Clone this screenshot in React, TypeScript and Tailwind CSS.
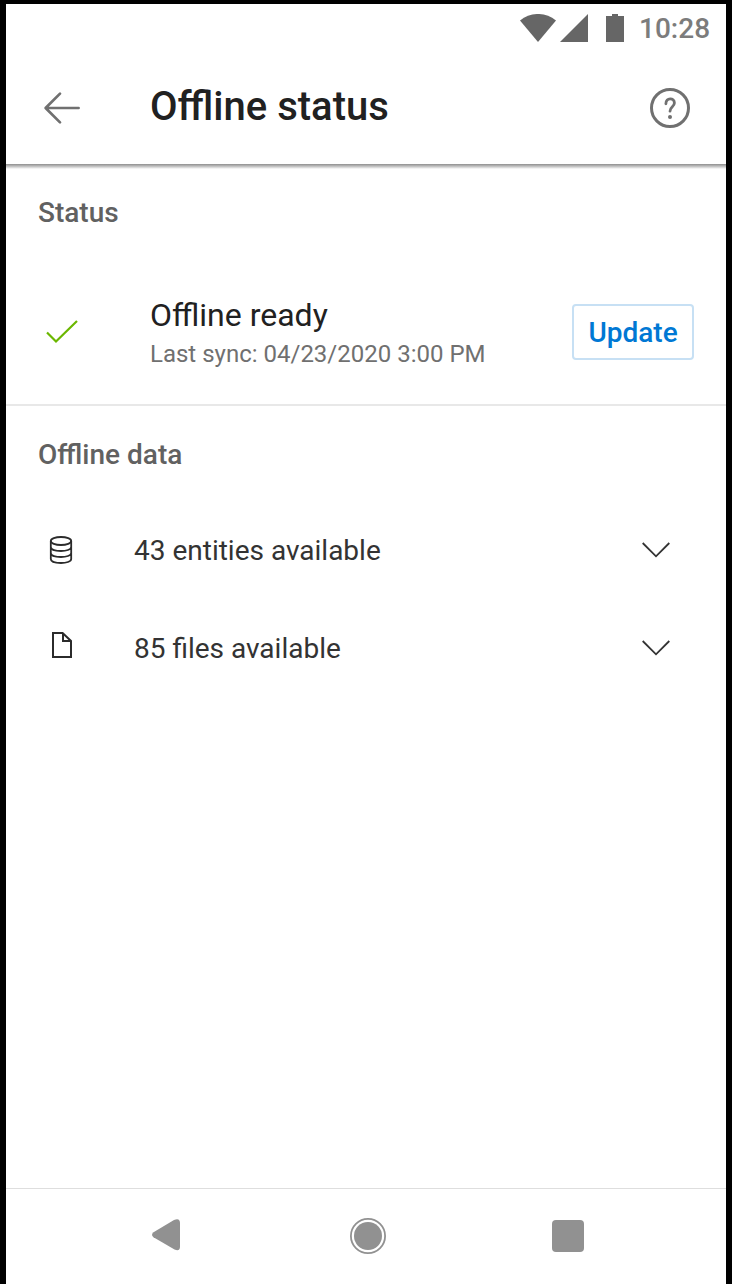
import React from "react";

function StatusBar() {
  return (
    <div className="flex h-12 shrink-0 items-center justify-end pr-4">
      <svg className="h-7 w-9" viewBox="0 0 36 28" fill="#666666">
        <path d="M0 6.5C10.5-2.2 25.5-2.2 36 6.5L18 28Z" />
      </svg>
      <svg className="ml-1 h-7 w-7" viewBox="0 0 28 28" fill="#666666">
        <path d="M28 0V28H0Z" />
      </svg>
      <svg className="ml-[18px] h-7 w-[18px]" viewBox="0 0 18 28" fill="#666666">
        <path d="M6 0H12V2H18V28H0V2H6Z" />
      </svg>
      <span className="ml-[15px] w-[71px] pt-0.5 whitespace-nowrap text-[28px] leading-8 font-medium text-[#7c7c7c]">10:28</span>
    </div>
  );
}

function Header() {
  return (
    <header className="flex h-28 shrink-0 items-center pr-9 pl-[37px]">
      <svg className="h-9 w-[38px]" viewBox="0 0 38 36" fill="none" stroke="#707070" strokeWidth="2.7" strokeLinecap="round" strokeLinejoin="round">
        <path d="M35.6 18H2.7M17 3.6L2.6 18L17 32.4" />
      </svg>
      <h1 className="mb-0.5 ml-[69px] flex-1 text-[40px] leading-12 font-medium text-[#212121]">Offline status</h1>
      <svg className="h-10 w-10" viewBox="0 0 40 40" fill="none" stroke="#707070">
        <circle cx="20" cy="20" r="18.5" strokeWidth="3" />
        <path d="M15.9 15.8C15.9 9.2 24.4 9.3 24.4 15C24.4 18.8 20 18.7 20 23.2" strokeWidth="2.8" strokeLinecap="round" />
        <circle cx="20" cy="29" r="2" fill="#707070" stroke="none" />
      </svg>
    </header>
  );
}

function Chevron() {
  return (
    <svg className="h-4 w-7" viewBox="0 0 28 16" fill="none" stroke="#333333" strokeWidth="1.8">
      <path d="M0.7 1L14 14.3L27.3 1" />
    </svg>
  );
}

function DatabaseIcon() {
  return (
    <svg className="h-7 w-6" viewBox="0 0 24 28" fill="none" stroke="#2b2b2b" strokeWidth="1.8">
      <ellipse cx="12" cy="5" rx="10.2" ry="4" />
      <path d="M1.8 5V23C1.8 28.3 22.2 28.3 22.2 23V5M1.8 11C1.8 16.3 22.2 16.3 22.2 11M1.8 17C1.8 22.3 22.2 22.3 22.2 17" />
    </svg>
  );
}

function FileIcon() {
  return (
    <svg className="mb-1.5 h-7 w-6" viewBox="0 0 24 28" fill="none" stroke="#2b2b2b" strokeWidth="2">
      <path d="M4 2H13.6L22 10V26H4ZM14 2V10H22" />
    </svg>
  );
}

function DataRow({ icon, label }: { icon: React.ReactNode; label: string }) {
  return (
    <div className="flex h-[98px] items-center pr-[56px] pl-[43px]">
      {icon}
      <span className="ml-[61px] flex-1 pt-0.5 text-[28px] leading-8 text-[#333333]">{label}</span>
      <Chevron />
    </div>
  );
}

function NavBar() {
  return (
    <nav className="flex h-24 shrink-0 items-center border-t border-[#dedede] pb-0.5 pl-[146px]">
      <svg className="mb-0.5 h-8 w-7" viewBox="0 0 28 32" fill="#919191">
        <path d="M1.5 13.2L22 0.9Q28-1.5 28 4V27.5Q28 33 22.5 30.6L1.5 18.2Q-1.5 15.8 1.5 13.2Z" />
      </svg>
      <svg className="ml-[170px] h-9 w-9" viewBox="0 0 36 36">
        <circle cx="18" cy="18" r="17.1" fill="none" stroke="#919191" strokeWidth="1.8" />
        <circle cx="18" cy="18" r="14" fill="#919191" />
      </svg>
      <div className="ml-[166px] h-8 w-8 rounded-[4px] bg-[#919191]" />
    </nav>
  );
}

export default function App() {
  return (
    <div className="h-[1284px] w-[732px] bg-black px-1.5 pt-1 font-['Roboto',sans-serif]">
      <div className="flex h-full flex-col bg-white">
        <StatusBar />
        <Header />
        <div className="h-[5px] shrink-0 bg-linear-to-b from-[#8f8f8f] via-[#c4c4c4] to-white" />
        <section className="h-[237px] shrink-0 border-b-2 border-[#e8e8e8] pt-7">
          <h2 className="pl-8 text-[28px] leading-8 font-medium text-[#616161]">Status</h2>
          <div className="mt-[65px] flex items-start pr-8 pl-10">
            <svg className="mt-[26px] h-6 w-8" viewBox="0 0 32 24" fill="none" stroke="#6bb700" strokeWidth="2.2">
              <path d="M1 12.5L10 21.5L31 1" />
            </svg>
            <div className="ml-[72px] flex-1 pt-px">
              <p className="text-[32px] leading-10 text-[#212121]">Offline ready</p>
              <p className="mt-[3px] text-[24px] leading-8 text-[#707070]">Last sync: 04/23/2020 3:00 PM</p>
            </div>
            <button className="mt-[10px] h-14 w-[122px] rounded-[4px] border-2 border-[#c7e0f4] pt-0.5 text-[28px] leading-8 font-medium text-[#0078d4]">
              Update
            </button>
          </div>
        </section>
        <section className="flex-1 pt-[33px]">
          <h2 className="pl-8 text-[28px] leading-8 font-medium text-[#616161]">Offline data</h2>
          <div className="mt-[30px]">
            <DataRow icon={<DatabaseIcon />} label="43 entities available" />
            <DataRow icon={<FileIcon />} label="85 files available" />
          </div>
        </section>
        <NavBar />
      </div>
    </div>
  );
}
